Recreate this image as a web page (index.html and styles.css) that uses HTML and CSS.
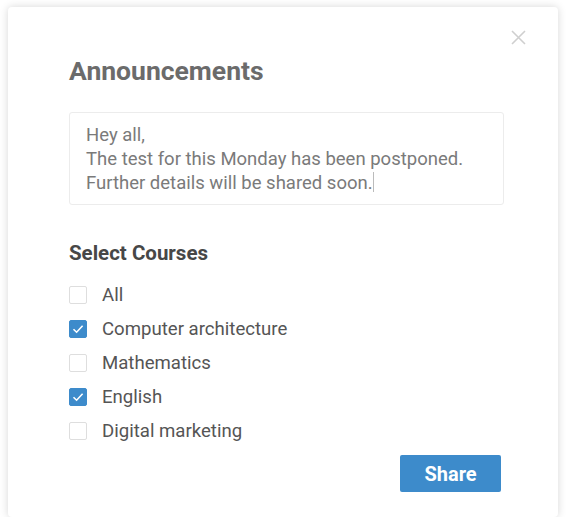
FILE: index.html
```html
<!DOCTYPE html>
<html>
<head>
<meta charset="utf-8">
<link rel="stylesheet" href="styles.css">
</head>
<body>
<div class="card">
  <button class="close" aria-label="Close">
    <svg width="15" height="15" viewBox="0 0 15 15"><path d="M1 1L14 14M14 1L1 14" stroke="#cfcfcf" stroke-width="1.6" fill="none"/></svg>
  </button>
  <h1 class="title">Announcements</h1>
  <div class="message">Hey all,<br>The test for this Monday has been postponed.<br>Further details will be shared soon.<span class="caret"></span></div>
  <h2 class="subtitle">Select Courses</h2>
  <ul class="courses">
    <li class="course"><span class="box"></span><span>All</span></li>
    <li class="course"><span class="box checked"><svg width="14" height="14" viewBox="0 0 14 14"><path d="M2.5 7.2L5.6 10.2L11.6 3.8" stroke="#fff" stroke-width="1.6" fill="none"/></svg></span><span>Computer architecture</span></li>
    <li class="course"><span class="box"></span><span>Mathematics</span></li>
    <li class="course"><span class="box checked"><svg width="14" height="14" viewBox="0 0 14 14"><path d="M2.5 7.2L5.6 10.2L11.6 3.8" stroke="#fff" stroke-width="1.6" fill="none"/></svg></span><span>English</span></li>
    <li class="course"><span class="box"></span><span>Digital marketing</span></li>
  </ul>
  <div class="actions"><button class="share">Share</button></div>
</div>
</body>
</html>
```
FILE: styles.css
```css
* { box-sizing: border-box; }
html, body { margin: 0; padding: 0; background: #fff; }
body { font-family: Roboto, "Liberation Sans", sans-serif; }
.card {
  position: relative;
  margin: 7px 0 0 8px;
  width: 550px;
  height: 510px;
  background: #fff;
  border-radius: 4px;
  box-shadow: 0 0 8px rgba(0,0,0,0.16);
  padding: 44px 54px 0 61px;
}
.close {
  position: absolute;
  top: 23px;
  right: 32px;
  border: 0;
  background: none;
  padding: 0;
  width: 15px;
  height: 15px;
  display: flex;
}
.title {
  margin: 0;
  font-size: 26.5px;
  line-height: 40px;
  font-weight: 700;
  color: #6b6b6b;
}
.message {
  margin-top: 21px;
  height: 93px;
  border: 1px solid #ececec;
  border-radius: 3px;
  padding: 10px 16px 0;
  font-size: 18.5px;
  line-height: 24px;
  color: #7a7a7a;
}
.caret { display: inline-block; width: 1px; height: 20px; background: #bbb; vertical-align: -3px; }
.subtitle {
  margin: 33px 0 0;
  font-size: 20.5px;
  line-height: 30px;
  font-weight: 700;
  color: #474747;
}
.courses { list-style: none; margin: 10px 0 0; padding: 0; }
.course {
  display: flex;
  align-items: center;
  gap: 15px;
  height: 34px;
  font-size: 18.6px;
  color: #555;
}
.box {
  width: 18px;
  height: 18px;
  border: 1px solid #dedede;
  border-radius: 2px;
  display: flex;
  align-items: center;
  justify-content: center;
}
.box.checked { background: #3d8bcb; border-color: #3d8bcb; }
.actions { display: flex; justify-content: flex-end; margin-top: 7px; padding-right: 3px; }
.share {
  width: 101px;
  height: 37px;
  border: 0;
  border-radius: 2px;
  background: #3d8bcb;
  color: #fff;
  font-family: Roboto, "Liberation Sans", sans-serif;
  font-size: 20px;
  font-weight: 700;
}
```
